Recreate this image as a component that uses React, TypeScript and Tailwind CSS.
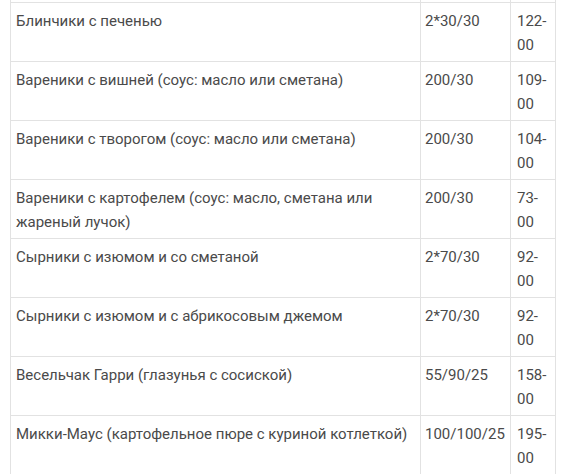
import React from "react";

const rows: [string, string, string][] = [
  ["Блинчики с печенью", "2*30/30", "122-00"],
  ["Вареники с вишней (соус: масло или сметана)", "200/30", "109-00"],
  ["Вареники с творогом (соус: масло или сметана)", "200/30", "104-00"],
  ["Вареники с картофелем (соус: масло, сметана или жареный лучок)", "200/30", "73-00"],
  ["Сырники с изюмом и со сметаной", "2*70/30", "92-00"],
  ["Сырники с изюмом и с абрикосовым джемом", "2*70/30", "92-00"],
  ["Весельчак Гарри (глазунья с сосиской)", "55/90/25", "158-00"],
  ["Микки-Маус (картофельное пюре с куриной котлеткой)", "100/100/25", "195-00"],
];

export default function App() {
  return (
    <div
      className="w-[564px] h-[474px] overflow-hidden bg-white text-[15px] leading-[23.5px] text-[#4a4a4a]"
      style={{ fontFamily: "Roboto, 'Noto Sans', sans-serif" }}
    >
      <div className="ml-[10px] grid grid-cols-[410px_90px_46px]">
        <div className="h-[2px] border-l border-[#e2e2e2]" />
        <div className="h-[2px] border-l border-[#e2e2e2]" />
        <div className="h-[2px] border-l border-r border-[#e2e2e2]" />
        {rows.map(([name, weight, price], i) => (
          <React.Fragment key={i}>
            <div className="h-[59px] border-t border-l border-[#e2e2e2] pl-[5px] pr-[4px] pt-[7px]">
              {name}
            </div>
            <div className="h-[59px] border-t border-l border-[#e2e2e2] pl-[4px] pr-[2px] pt-[7px] whitespace-nowrap">
              {weight}
            </div>
            <div className="h-[59px] border-t border-l border-r border-[#e2e2e2] pl-[6px] pr-[4px] pt-[7px] break-words">
              {price}
            </div>
          </React.Fragment>
        ))}
      </div>
    </div>
  );
}
